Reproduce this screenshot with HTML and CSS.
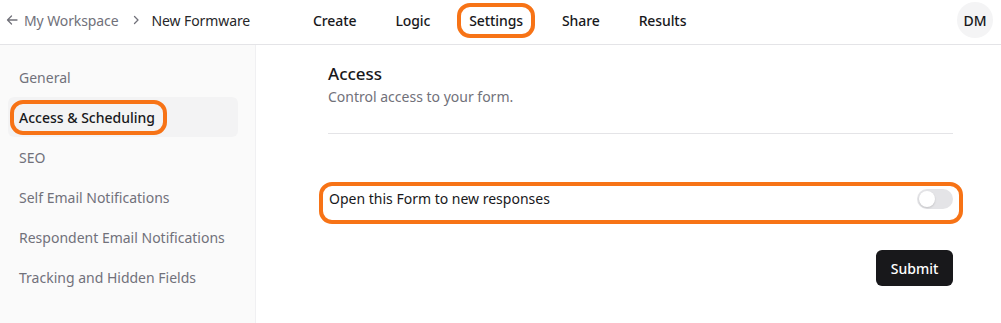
FILE: index.html
```html
<!DOCTYPE html>
<html lang="en">
<head>
  <meta charset="UTF-8" />
  <title>Settings - New Formware</title>
  <link rel="stylesheet" href="styles.css">
</head>
<body>
  <div id="header">
    <div class="crumbs">
      <svg class="back" width="12" height="12" viewBox="0 0 12 12" fill="none" stroke="#71717a" stroke-width="1.3" stroke-linecap="round" stroke-linejoin="round">
        <path d="M11 6H1.5M5.5 2L1.5 6l4 4"/>
      </svg>
      <span class="crumb-link">My Workspace</span>
      <svg class="chev" width="8" height="10" viewBox="0 0 8 10" fill="none" stroke="#71717a" stroke-width="1.3" stroke-linecap="round" stroke-linejoin="round">
        <path d="M2.5 1.5L6 5 2.5 8.5"/>
      </svg>
      <span class="crumb-current">New Formware</span>
    </div>
    <div class="tabs">
      <span class="tab">Create</span>
      <span class="tab">Logic</span>
      <span class="tab tab-active marked">Settings</span>
      <span class="tab">Share</span>
      <span class="tab">Results</span>
    </div>
    <div class="avatar">DM</div>
  </div>

  <div id="body">
    <div id="sidebar">
      <div class="side-item">General</div>
      <div class="side-item side-active"><span class="marked side-mark">Access &amp; Scheduling</span></div>
      <div class="side-item">SEO</div>
      <div class="side-item">Self Email Notifications</div>
      <div class="side-item">Respondent Email Notifications</div>
      <div class="side-item">Tracking and Hidden Fields</div>
    </div>

    <div id="main">
      <h2>Access</h2>
      <p class="sub">Control access to your form.</p>
      <div class="divider"></div>
      <div class="option marked">
        <span>Open this Form to new responses</span>
        <span class="toggle"><span class="knob"></span></span>
      </div>
      <div class="actions">
        <button class="submit">Submit</button>
      </div>
    </div>
  </div>
</body>
</html>
```

FILE: styles.css
```css
html, body {
  margin: 0;
  padding: 0;
  height: 100%;
  background: #ffffff;
  font-family: 'Noto Sans', sans-serif;
  color: #18181b;
  font-size: 14px;
  overflow: hidden;
}
#header {
  height: 40px;
  padding: 0 8px 4px 6px;
  border-bottom: 1px solid #e4e4e7;
  display: flex;
  align-items: center;
}
.crumbs {
  display: flex;
  align-items: center;
  width: 295px;
  letter-spacing: -0.1px;
}
.back {
  margin-right: 6px;
}
.crumb-link {
  color: #71717a;
}
.chev {
  margin: 0 12px 0 13px;
}
.crumb-current {
  color: #27272a;
}
.tabs {
  flex: 1;
  display: flex;
  align-items: center;
  gap: 15px;
}
.tab {
  padding: 8px 12px;
  font-weight: 500;
  color: #18181b;
  letter-spacing: -0.1px;
}
.marked {
  border: 4px solid #f77316;
  border-radius: 13px;
}
.tab-active {
  padding: 4px 8px;
}
.avatar {
  width: 36px;
  height: 36px;
  border-radius: 50%;
  background: #f4f4f5;
  display: flex;
  align-items: center;
  justify-content: center;
  font-weight: 500;
  font-size: 14px;
}
#body {
  display: flex;
  height: calc(100% - 45px);
}
#sidebar {
  width: 256px;
  flex-shrink: 0;
  background: #fafafa;
  border-right: 1px solid #f0f0f2;
  padding: 12px 17px 0 8px;
  box-sizing: border-box;
}
.side-item {
  height: 40px;
  display: flex;
  align-items: center;
  padding-left: 11px;
  color: #71717a;
  border-radius: 6px;
}
.side-active {
  background: #f3f3f4;
  color: #18181b;
  font-weight: 500;
  padding-left: 2px;
}
.side-mark {
  padding: 4px 8px 4px 5px;
}
#main {
  flex: 1;
  padding: 17px 48px 0 72px;
}
#main h2 {
  margin: 0;
  font-size: 17px;
  font-weight: 500;
  line-height: 24px;
}
.sub {
  margin: 1px 0 0;
  color: #71717a;
  line-height: 20px;
}
.divider {
  height: 1px;
  background: #e4e4e7;
  margin-top: 26px;
}
.option {
  margin: 48px -10px 0 -9px;
  height: 34px;
  display: flex;
  align-items: center;
  justify-content: space-between;
  padding: 0 6px;
}
.option > span:first-child {
  margin-top: -10px;
}
.toggle {
  width: 36px;
  height: 20px;
  border-radius: 10px;
  background: #e4e4e7;
  display: flex;
  align-items: center;
  padding: 0 2px;
  box-sizing: border-box;
  margin-top: -8px;
}
.knob {
  width: 16px;
  height: 16px;
  border-radius: 50%;
  background: #ffffff;
  box-shadow: 0 1px 2px rgba(0,0,0,0.15);
}
.actions {
  display: flex;
  justify-content: flex-end;
  margin-top: 26px;
}
.submit {
  background: #18181b;
  color: #ffffff;
  border: none;
  border-radius: 6px;
  width: 77px;
  height: 36px;
  font-family: inherit;
  font-size: 14px;
  font-weight: 500;
}
```
